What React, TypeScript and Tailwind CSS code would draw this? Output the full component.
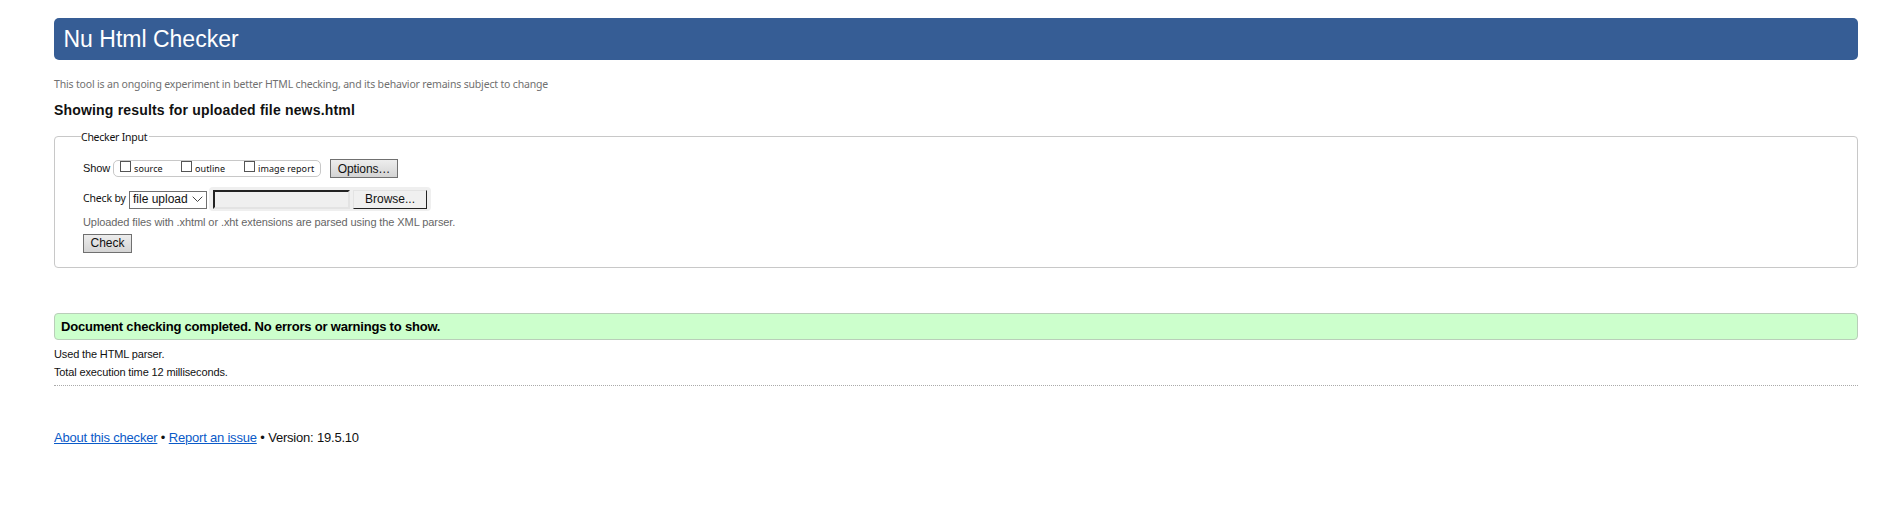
import React from "react";

const sans = "font-['Liberation_Sans',sans-serif]";
const humanist = "font-['Noto_Sans',sans-serif]";

function Check({ label, className }: { label: string; className: string }) {
  return (
    <label className={"flex shrink-0 items-start gap-[3px] " + className}>
      <input type="checkbox" className="block size-[11px] shrink-0 appearance-none border border-[#555] bg-white" />
      <span className={"mt-[1px] whitespace-nowrap text-[9px] leading-[14px] tracking-[0.08px] text-[#111] " + humanist}>{label}</span>
    </label>
  );
}

export default function App() {
  return (
    <div className={"min-h-[509px] bg-white pt-[18px] pr-8 pl-[54px] text-[#111] " + sans}>
      <header className="flex h-[42px] items-center rounded-[5px] bg-[#365d95] pl-[9.5px]">
        <h1 className="whitespace-nowrap text-[23px] leading-[42px] text-white">Nu Html Checker</h1>
      </header>
      <p className={"mt-[16px] h-4 whitespace-nowrap text-[10.5px] leading-4 tracking-[-0.17px] text-[#707070] " + humanist}>
        This tool is an ongoing experiment in better HTML checking, and its behavior remains subject to change
      </p>
      <h2 className="mt-[9px] h-[18px] whitespace-nowrap text-[14px] leading-[18px] font-bold tracking-[0.18px]">
        Showing results for uploaded file news.html
      </h2>
      <form className="mt-[17px]">
        <fieldset className="h-[132px] rounded-[4px] border border-[#c8c8c8]">
          <div className="-mt-[8px] ml-[26px] h-4 w-[68px] bg-white">
            <span className={"block whitespace-nowrap text-[10.5px] leading-4 tracking-[-0.25px] " + humanist}>Checker Input</span>
          </div>
          <div className="mt-[14px] ml-[28px] flex h-[20px] items-start">
            <span className="w-[30px] shrink-0 text-[11px] leading-[18px] tracking-[-0.1px]">Show</span>
            <div className="mt-px flex h-[17px] w-[208px] shrink-0 rounded-[5px] border border-[#c8c8c8] pl-[6px]">
              <Check label="source" className="w-[61px]" />
              <Check label="outline" className="w-[63px]" />
              <Check label="image report" className="" />
            </div>
            <button type="button" className="ml-[9px] h-[19px] w-[68px] border border-[#707070] bg-linear-to-b from-[#ededed] to-[#d4d4d4] text-[12px] leading-[16px] tracking-[-0.1px] whitespace-nowrap">Options…</button>
          </div>
          <div className="mt-[8px] ml-[28px] flex h-[24px] items-start">
            <span className={"mt-[3px] w-[46px] shrink-0 whitespace-nowrap text-[10.5px] leading-4 tracking-[-0.15px] " + humanist}>Check by</span>
            <button type="button" className="mt-[4px] flex h-[18px] w-[78px] shrink-0 items-start justify-between border border-[#707070] bg-white pr-[3px] pl-[3px] text-[12px] leading-[15px] whitespace-nowrap">
              file upload
              <svg className="mt-[4px]" width="11" height="7" viewBox="0 0 11 7" fill="none" stroke="#444" strokeWidth="1"><path d="M.7.7 5.5 5.5 10.3.7" /></svg>
            </button>
            <div className="ml-[2px] flex h-[24px] w-[222px] shrink-0 gap-[3px] rounded-[4px] bg-[#efefef] pt-[3px] pl-[4px]">
              <div className="h-[19px] w-[137px] border-2 border-t-[#222] border-r-[#e3e3e3] border-b-[#e3e3e3] border-l-[#222] bg-[#efefef]" />
              <button type="button" className="flex h-[19px] w-[74px] items-start justify-center border border-t-[#e3e3e3] border-r-[#222] border-b-[#222] border-l-[#e3e3e3] bg-[#f0f0f0] text-[12px] leading-[16px]">Browse...</button>
            </div>
          </div>
          <p className="mt-[3px] ml-[28px] h-4 whitespace-nowrap text-[11px] leading-4 tracking-[-0.09px] text-[#666]">
            Uploaded files with .xhtml or .xht extensions are parsed using the XML parser.
          </p>
          <button type="button" className="mt-[4px] ml-[28px] block h-[19px] w-[49px] border border-[#707070] bg-linear-to-b from-[#ededed] to-[#d4d4d4] text-[12px] leading-[17px]">Check</button>
        </fieldset>
      </form>
      <p className="mt-[45px] h-[27px] rounded-[4px] border border-[#b9ceb9] bg-[#ccffcc] pl-[6px] text-[13px] leading-[25px] font-bold tracking-[-0.2px] whitespace-nowrap text-black">
        Document checking completed. No errors or warnings to show.
      </p>
      <p className="mt-[5px] h-[18px] text-[11px] leading-[18px] tracking-[-0.14px] whitespace-nowrap">Used the HTML parser.</p>
      <p className="h-[18px] text-[11px] leading-[18px] tracking-[-0.13px] whitespace-nowrap">Total execution time 12 milliseconds.</p>
      <div className="mt-[4px] border-t border-dotted border-[#aaa]" />
      <footer className="mt-[43px] flex gap-[3.5px] text-[13px] leading-[18px] tracking-[-0.2px] whitespace-nowrap">
        <a href="#about" className="text-[#0a5ac8] underline">About this checker</a>
        <span>•</span>
        <a href="#issue" className="text-[#0a5ac8] underline">Report an issue</a>
        <span>•</span>
        <span>Version: 19.5.10</span>
      </footer>
    </div>
  );
}
